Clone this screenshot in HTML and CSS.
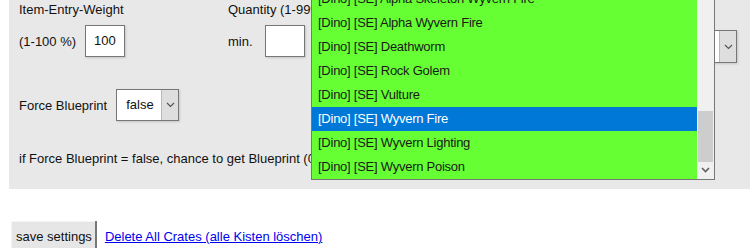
FILE: index.html
```html
<!DOCTYPE html>
<html lang="en">
<head>
    <meta charset="UTF-8">
    <title>Crate Settings</title>
    <link rel="stylesheet" href="styles.css">
</head>
<body>
    <!-- Item entry panel -->
    <div class="entry-panel">
        <div class="entry-row">
            <div class="entry-col col-weight">
                <div class="entry-label">Item-Entry-Weight</div>
                <div class="field-line">
                    <span>(1-100 %)</span>
                    <div class="text-box">100</div>
                </div>
            </div>
            <div class="entry-col col-quantity">
                <div class="entry-label">Quantity (1-999)</div>
                <div class="field-line">
                    <span>min.</span>
                    <div class="text-box"></div>
                </div>
            </div>
            <div class="entry-col col-item">
                <div class="entry-label">&nbsp;</div>
                <div class="select-box item-select">
                    <span class="select-value"></span>
                    <span class="select-arrow"><svg width="9" height="6" viewBox="0 0 9 6"><path d="M1 1l3.5 3.5L8 1" fill="none" stroke="#555" stroke-width="1.2"/></svg></span>
                </div>
            </div>
        </div>

        <div class="field-line force-line">
            <span>Force Blueprint</span>
            <div class="select-box">
                <span class="select-value">false</span>
                <span class="select-arrow"><svg width="9" height="6" viewBox="0 0 9 6"><path d="M1 1l3.5 3.5L8 1" fill="none" stroke="#555" stroke-width="1.2"/></svg></span>
            </div>
        </div>

        <div class="chance-line">if Force Blueprint = false, chance to get Blueprint (0-100 %)</div>

        <!-- Open dropdown list -->
        <div class="dropdown-list">
            <div class="dropdown-items">
                <div class="dropdown-item">[Dino] [SE] Alpha Skeleton Wyvern Fire</div>
                <div class="dropdown-item">[Dino] [SE] Alpha Wyvern Fire</div>
                <div class="dropdown-item">[Dino] [SE] Deathworm</div>
                <div class="dropdown-item">[Dino] [SE] Rock Golem</div>
                <div class="dropdown-item">[Dino] [SE] Vulture</div>
                <div class="dropdown-item selected">[Dino] [SE] Wyvern Fire</div>
                <div class="dropdown-item">[Dino] [SE] Wyvern Lighting</div>
                <div class="dropdown-item">[Dino] [SE] Wyvern Poison</div>
            </div>
            <div class="list-scrollbar">
                <div class="scroll-thumb"></div>
                <div class="scroll-down"><svg width="9" height="6" viewBox="0 0 9 6"><path d="M1 1l3.5 3.5L8 1" fill="none" stroke="#606060" stroke-width="1.6"/></svg></div>
            </div>
        </div>
    </div>

    <div class="actions">
        <button class="save-btn">save settings</button>
        <a href="#" class="delete-link">Delete All Crates (alle Kisten löschen)</a>
    </div>
</body>
</html>
```

FILE: styles.css
```css
body {
    font-family: Tahoma, "Liberation Sans", Arial, sans-serif;
    font-size: 13px;
    color: #111;
    margin: 0;
    background-color: #fff;
    overflow: hidden;
}

.entry-panel {
    position: relative;
    margin-left: 9px;
    padding: 2px 0 22px 10px;
    background-color: #e8e8e8;
}

.entry-row {
    display: flex;
    height: 55px;
}

.col-weight {
    width: 209px;
}

.col-item {
    margin-left: auto;
    margin-right: 13px;
}

.entry-label {
    height: 16px;
    line-height: 16px;
}

.field-line {
    display: flex;
    align-items: center;
    gap: 9px;
    margin-top: 7px;
}

.col-quantity .field-line {
    gap: 12px;
}

.text-box {
    box-sizing: border-box;
    width: 40px;
    height: 32px;
    padding: 0 8px;
    line-height: 30px;
    background-color: #fff;
    border: 1px solid #767676;
    box-shadow: 1px 1px 2px rgba(0, 0, 0, 0.15);
}

.select-box {
    box-sizing: border-box;
    display: flex;
    width: 63px;
    height: 32px;
    background-color: #fff;
    border: 1px solid #767676;
    box-shadow: 1px 1px 2px rgba(0, 0, 0, 0.15);
}

.select-value {
    flex: 1;
    padding-left: 9px;
    line-height: 30px;
}

.select-arrow {
    width: 16px;
    display: flex;
    align-items: center;
    justify-content: center;
    background-color: #dedede;
    border-left: 1px solid #b8b8b8;
}

.item-select {
    width: 170px;
    height: 33px;
    margin-top: 12px;
}

.force-line {
    margin-top: 32px;
}

.chance-line {
    margin-top: 30px;
    height: 16px;
    line-height: 16px;
}

/* the open list sits over the form */
.dropdown-list {
    position: absolute;
    left: 302px;
    top: 0;
    width: 402px;
    height: 179px;
    display: flex;
    overflow: hidden;
    background-color: #66ff33;
    border: 1px solid #777;
    border-top: none;
}

.dropdown-items {
    flex: 1;
    margin-top: -13px;
}

.dropdown-item {
    height: 24px;
    line-height: 24px;
    padding-left: 6px;
    white-space: nowrap;
    letter-spacing: -0.25px;
    color: #1a1a1a;
}

.dropdown-item.selected {
    background-color: #0078d7;
    color: #fff;
}

.list-scrollbar {
    width: 17px;
    position: relative;
    background-color: #f0f0f0;
}

.scroll-thumb {
    position: absolute;
    left: 1px;
    right: 1px;
    top: 111px;
    height: 51px;
    background-color: #cdcdcd;
}

.scroll-down {
    position: absolute;
    left: 0;
    right: 0;
    bottom: 1px;
    height: 17px;
    display: flex;
    align-items: center;
    justify-content: center;
}

.actions {
    display: flex;
    align-items: flex-start;
    gap: 8px;
    margin: 32px 0 0 11px;
}

.save-btn {
    font-family: inherit;
    font-size: 13px;
    color: #111;
    height: 32px;
    padding: 0 3px 0 5px;
    line-height: 32px;
    background-color: #e6e6e6;
    border: none;
    border-right: 2px solid #777;
    box-shadow: inset 1px 1px 0 #f4f4f4;
}

.delete-link {
    color: #0000ee;
    font-size: 13px;
    line-height: 32px;
}
```
